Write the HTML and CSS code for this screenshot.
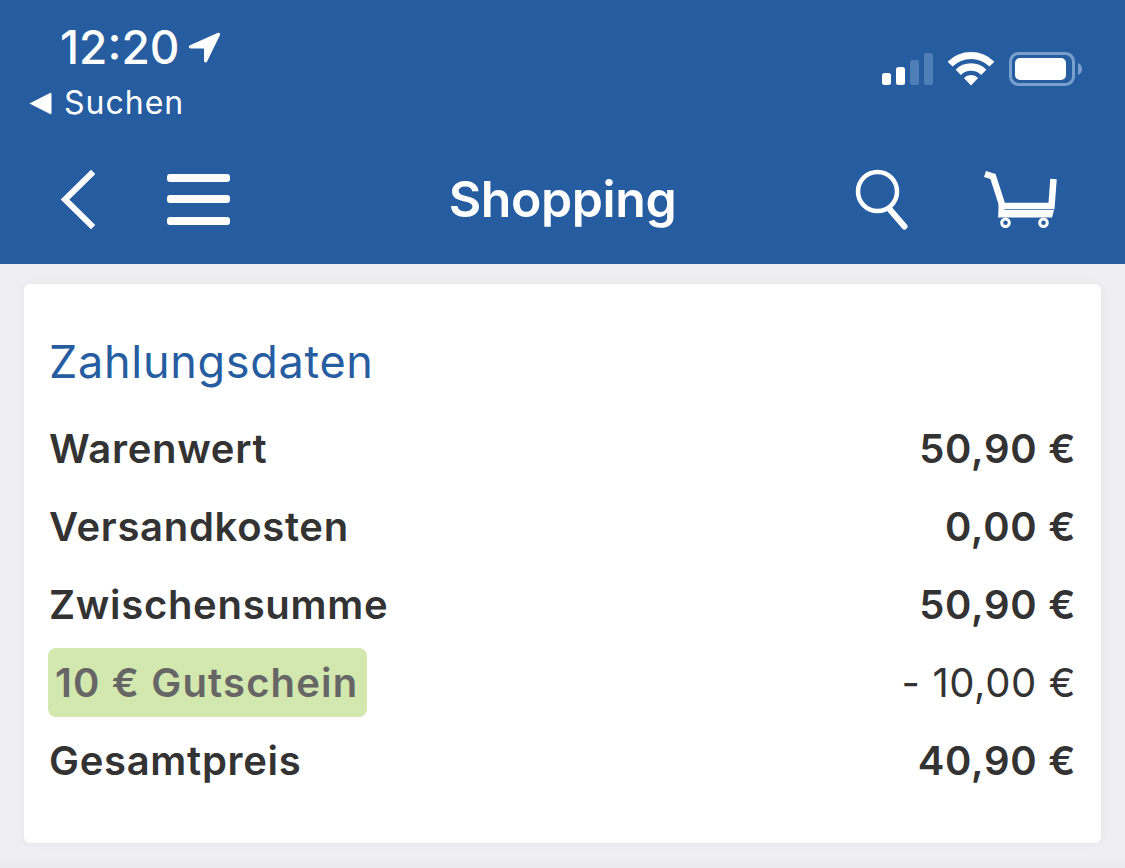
FILE: index.html
```html
<!DOCTYPE html>
<html lang="de">
<head>
<meta charset="utf-8">
<title>Shopping</title>
<link rel="stylesheet" href="styles.css">
</head>
<body>
<header class="header">
  <div class="status">
    <div class="status-left">
      <div class="clock">
        <span class="time">12:20</span>
        <svg class="ico-loc" viewBox="189 30 33 33"><path d="M219 31.800 191 44.300c-1.800.9-1.400 3.100.6 3.100h12.400c.7 0 1 .3 1 1v11.200c0 2.200 2.300 2.500 3.100.8L221 34c.6-1.500-.6-2.800-2-2.200Z" fill="#fff"/></svg>
      </div>
      <div class="back-app">
        <svg class="ico-tri" viewBox="29 91 23 23"><path d="M29.500 102.500 50 92c.8-.4 1.500 0 1.500.9v19.200c0 .9-.7 1.300-1.500.9Z" fill="#fff"/></svg>
        <span>Suchen</span>
      </div>
    </div>
    <div class="status-right">
      <svg class="ico-sig" viewBox="882 53 52 33">
        <rect x="882" y="73" width="9" height="12" rx="2.500" fill="#fff"/>
        <rect x="896" y="67" width="9" height="18" rx="2.500" fill="#fff"/>
        <rect x="910" y="60" width="9" height="25" rx="2.500" fill="#4d7fb6"/>
        <rect x="924" y="53" width="9" height="32" rx="2.500" fill="#4d7fb6"/>
      </svg>
      <svg class="ico-wifi" viewBox="947 51 48 35">
        <g fill="none" stroke="#fff">
          <path d="M950.100 64.100A29.500 29.500 0 0 1 991.900 64.100" stroke-width="7"/>
          <path d="M958.300 72.300A18 18 0 0 1 983.700 72.300" stroke-width="7.500"/>
        </g>
        <path d="M971 85.500 963.900 77.900A10 10 0 0 1 978.100 77.900Z" fill="#fff"/>
      </svg>
      <svg class="ico-bat" viewBox="1008 51 75 36">
        <rect x="1010.500" y="53.500" width="63" height="31" rx="8" fill="none" stroke="#79a0cb" stroke-width="3"/>
        <rect x="1015" y="58" width="51" height="22" rx="5" fill="#fff"/>
        <path d="M1078 63c2.500 1 4 3 4 6s-1.500 5-4 6Z" fill="#79a0cb"/>
      </svg>
    </div>
  </div>
  <nav class="nav">
    <div class="nav-side">
      <svg class="ico-chev" viewBox="58 166 40 64"><path d="M91 173 65 198.500 91 224" fill="none" stroke="#fff" stroke-width="6" stroke-linecap="square"/></svg>
      <div class="burger"><i></i><i></i><i></i></div>
    </div>
    <h1 class="title">Shopping</h1>
    <div class="nav-side nav-end">
      <svg class="ico-search" viewBox="854 166 54 62">
        <circle cx="877.500" cy="189.500" r="19.500" fill="none" stroke="#fff" stroke-width="4.500"/>
        <path d="M889 206.500 904.500 224.500" fill="none" stroke="#fff" stroke-width="6" stroke-linecap="round"/>
      </svg>
      <svg class="ico-cart" viewBox="982 168 76 62">
        <path d="M985 174 993 176.500 1002.500 206 1051.500 206 1053.500 179" fill="none" stroke="#fff" stroke-width="6.500"/>
        <path d="M998.500 210H1054L1052 217.500H998Z" fill="#fff"/>
        <rect x="998.500" y="204" width="6" height="7" fill="#fff"/>
        <circle cx="1005.500" cy="222.800" r="3.800" fill="none" stroke="#fff" stroke-width="3"/>
        <circle cx="1043.500" cy="222.800" r="3.800" fill="none" stroke="#fff" stroke-width="3"/>
      </svg>
    </div>
  </nav>
</header>
<main class="content">
  <section class="card">
    <h2 class="card-title">Zahlungsdaten</h2>
    <div class="row"><span>Warenwert</span><span>50,90 €</span></div>
    <div class="row"><span>Versandkosten</span><span>0,00 €</span></div>
    <div class="row"><span>Zwischensumme</span><span>50,90 €</span></div>
    <div class="row row-discount"><span class="voucher">10 € Gutschein</span><span class="minus">- 10,00 €</span></div>
    <div class="row"><span>Gesamtpreis</span><span>40,90 €</span></div>
  </section>
</main>
<div class="next-shadow"></div>
</body>
</html>
```
FILE: styles.css
```css
html, body {
  margin: 0;
  height: 868px;
  overflow: hidden;
  background: #eeeef3;
}
body {
  font-family: Inter, "Liberation Sans", sans-serif;
  color: #333;
}
svg { display: block; flex: none; }

.header {
  height: 264px;
  box-sizing: border-box;
  background: #265da1;
  color: #fff;
}
.status {
  height: 150px;
  display: flex;
  justify-content: space-between;
}
.status-left { padding: 22px 0 0 29px; }
.clock {
  display: flex;
  align-items: center;
  height: 50px;
  padding-left: 31px;
}
.time {
  font-size: 46px;
  font-weight: 500;
  line-height: 50px;
}
.ico-loc { width: 33px; height: 33px; margin-left: 9px; }
.back-app {
  display: flex;
  align-items: center;
  gap: 12px;
  margin-top: 8px;
  height: 46px;
  font-size: 32px;
  line-height: 46px;
  letter-spacing: 1px;
}
.ico-tri { width: 23px; height: 23px; }
.status-right {
  display: flex;
  align-items: flex-start;
  padding: 51px 42px 0 0;
}
.ico-sig { width: 52px; height: 33px; margin-top: 2px; margin-right: 13px; }
.ico-wifi { width: 48px; height: 35px; margin-right: 13px; }
.ico-bat { width: 75px; height: 36px; }

.nav {
  display: grid;
  grid-template-columns: 1fr auto 1fr;
  align-items: center;
  height: 114px;
  margin-top: -8px;
}
.nav-side { display: flex; align-items: center; padding-left: 58px; }
.nav-end { justify-content: flex-end; padding: 0 67px 0 0; }
.ico-chev { width: 40px; height: 64px; }
.burger {
  display: flex;
  flex-direction: column;
  gap: 13.500px;
  width: 63px;
  margin-left: 69px;
}
.burger i {
  display: block;
  height: 8px;
  border-radius: 3px;
  background: #fff;
}
.title {
  margin: 0;
  font-size: 50px;
  font-weight: 600;
  line-height: 56px;
  letter-spacing: -0.400px;
}
.ico-search { width: 54px; height: 62px; margin-right: 74px; }
.ico-cart { width: 76px; height: 62px; }

.content { padding: 20px 24px 0; }
.card {
  height: 559px;
  box-sizing: border-box;
  padding: 50px 25px 0;
  background: #fff;
  border-radius: 6px;
  box-shadow: 0 0 10px rgba(0, 0, 0, 0.05);
}
.card-title {
  margin: 0 0 20px;
  font-size: 45px;
  font-weight: 400;
  line-height: 56px;
  letter-spacing: 0.700px;
  color: #265da1;
}
.row {
  display: flex;
  justify-content: space-between;
  align-items: center;
  height: 78px;
  font-size: 40px;
  font-weight: 600;
  line-height: 50px;
  letter-spacing: 0.700px;
}
.voucher {
  margin: 0 0 2px -1px;
  padding: 10px 9px 9px 7px;
  border-radius: 8px;
  background: #d2e8ae;
  color: #666;
  letter-spacing: 1.150px;
}
.minus { font-weight: 400; letter-spacing: 0.600px; }
.next-shadow {
  height: 10px;
  margin-top: 15px;
  background: linear-gradient(rgba(0, 0, 0, 0), rgba(0, 0, 0, 0.025));
}
```
